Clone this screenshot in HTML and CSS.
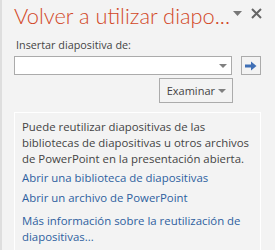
FILE: index.html
```html
<!DOCTYPE html>
<html lang="es">
<head>
<meta charset="utf-8">
<link rel="stylesheet" href="styles.css">
</head>
<body>
<div class="pane">
  <div class="header">
    <div class="title">Volver a utilizar diapo...</div>
    <div class="header-icons">
      <svg class="menu-tri" width="9" height="5" viewBox="0 0 9 5"><path d="M0 0H9L4.5 5Z" fill="#777"/></svg>
      <svg class="close" width="11" height="11" viewBox="0 0 11 11"><path d="M1 1L10 10M10 1L1 10" stroke="#666" stroke-width="2"/></svg>
    </div>
  </div>
  <div class="label">Insertar diapositiva de:</div>
  <div class="row">
    <div class="combo">
      <svg width="8" height="4" viewBox="0 0 8 4"><path d="M0 0H8L4 4Z" fill="#808080"/></svg>
    </div>
    <div class="go">
      <svg width="14" height="10" viewBox="0 0 14 10"><path d="M1 5H9" stroke="#3f6fb5" stroke-width="3"/><path d="M7 0.5L12.5 5L7 9.5Z" fill="#3f6fb5"/></svg>
    </div>
  </div>
  <div class="row2">
    <div class="browse">Examinar <svg width="8" height="4" viewBox="0 0 8 4"><path d="M0 0H8L4 4Z" fill="#808080"/></svg></div>
  </div>
  <div class="info">
    <p class="desc">Puede reutilizar diapositivas de las bibliotecas de diapositivas u otros archivos de PowerPoint en la presentación abierta.</p>
    <a class="link l1">Abrir una biblioteca de diapositivas</a>
    <a class="link l2">Abrir un archivo de PowerPoint</a>
    <a class="link l3">Más información sobre la reutilización de diapositivas...</a>
  </div>
</div>
</body>
</html>
```
FILE: styles.css
```css
html, body { margin: 0; padding: 0; }
body {
  font-family: "Open Sans", "Liberation Sans", sans-serif;
  background: #f3f3f3;
}
.pane {
  width: 273px;
  height: 250px;
  border-left: 2px solid #dedede;
  background: #f3f3f3;
  overflow: hidden;
}
.header {
  display: flex;
  align-items: flex-start;
  height: 37px;
  padding-left: 12px;
}
.title {
  font-family: "Lato", "Open Sans", sans-serif;
  font-weight: 300;
  font-size: 21.8px;
  color: #d24726;
  line-height: 32px;
  white-space: nowrap;
  flex: 0 0 auto;
}
.header-icons {
  display: flex;
  align-items: flex-start;
  margin-left: auto;
  margin-right: 13px;
  padding-top: 8px;
  flex: 0 0 auto;
}
.menu-tri { margin-top: 3px; margin-right: 9px; }
.label {
  font-size: 10.8px;
  color: #444;
  padding-left: 14px;
  line-height: 16px;
  height: 19px;
}
.row {
  display: flex;
  padding-left: 12px;
  gap: 9px;
}
.combo {
  width: 212px;
  height: 17px;
  background: #fff;
  border: 1px solid #ababab;
  display: flex;
  align-items: center;
  justify-content: flex-end;
  padding-right: 4px;
}
.go {
  width: 18px;
  height: 17px;
  border: 1px solid #ababab;
  display: flex;
  align-items: center;
  justify-content: center;
}
.row2 {
  display: flex;
  padding-left: 157px;
  margin-top: 3px;
}
.browse {
  width: 74px;
  height: 25px;
  border: 1px solid #ababab;
  font-size: 11px;
  color: #444;
  display: flex;
  align-items: center;
  justify-content: flex-end;
  gap: 3px;
  padding-right: 6px;
  box-sizing: border-box;
}
.info {
  margin: 9px 0 0 12px;
  width: 247px;
  height: 160px;
  border: 1px solid #fff;
  padding: 6px 7px;
  box-sizing: border-box;
}
.desc {
  margin: 0;
  font-size: 11.4px;
  line-height: 16px;
  color: #444;
}
.link {
  display: block;
  font-size: 11.4px;
  line-height: 16px;
  color: #2e5f9f;
}
.l1 { margin-top: 3px; }
.l2 { margin-top: 4px; }
.l3 { margin-top: 7px; }
```
